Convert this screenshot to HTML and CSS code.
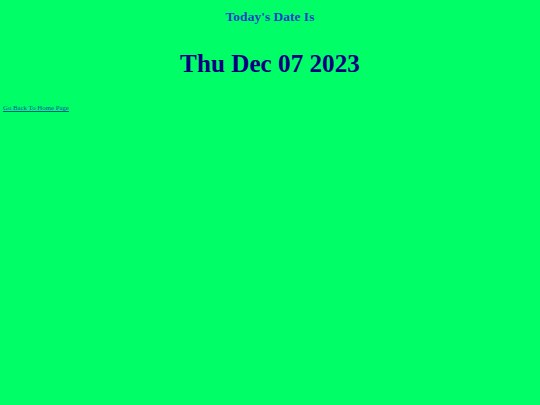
FILE: index.html
```html
<!DOCTYPE html>
<html>
<head>
<meta charset="utf-8">
<link rel="stylesheet" href="styles.css">
</head>
<body class="page">
<h3 class="title">Today's Date Is</h3>
<h1 class="date">Thu Dec 07 2023</h1>
<a class="back" href="#">Go Back To Home Page</a>
</body>
</html>
```
FILE: styles.css
```css
html, body { margin: 0; padding: 0; }
.page {
  background: #00ff66;
  font-family: "Liberation Serif", "Times New Roman", serif;
  padding: 3px;
  min-height: 405px;
  box-sizing: border-box;
}
.title {
  text-align: center;
  color: #1a3fcc;
  font-size: 13.5px;
  font-weight: bold;
  margin: 6px 0 0;
}
.date {
  text-align: center;
  color: #000080;
  font-size: 25.2px;
  font-weight: bold;
  margin: 25px 0 0;
}
.back {
  display: inline-block;
  margin-top: 26px;
  font-size: 6.8px;
  color: #0058a0;
}
```
